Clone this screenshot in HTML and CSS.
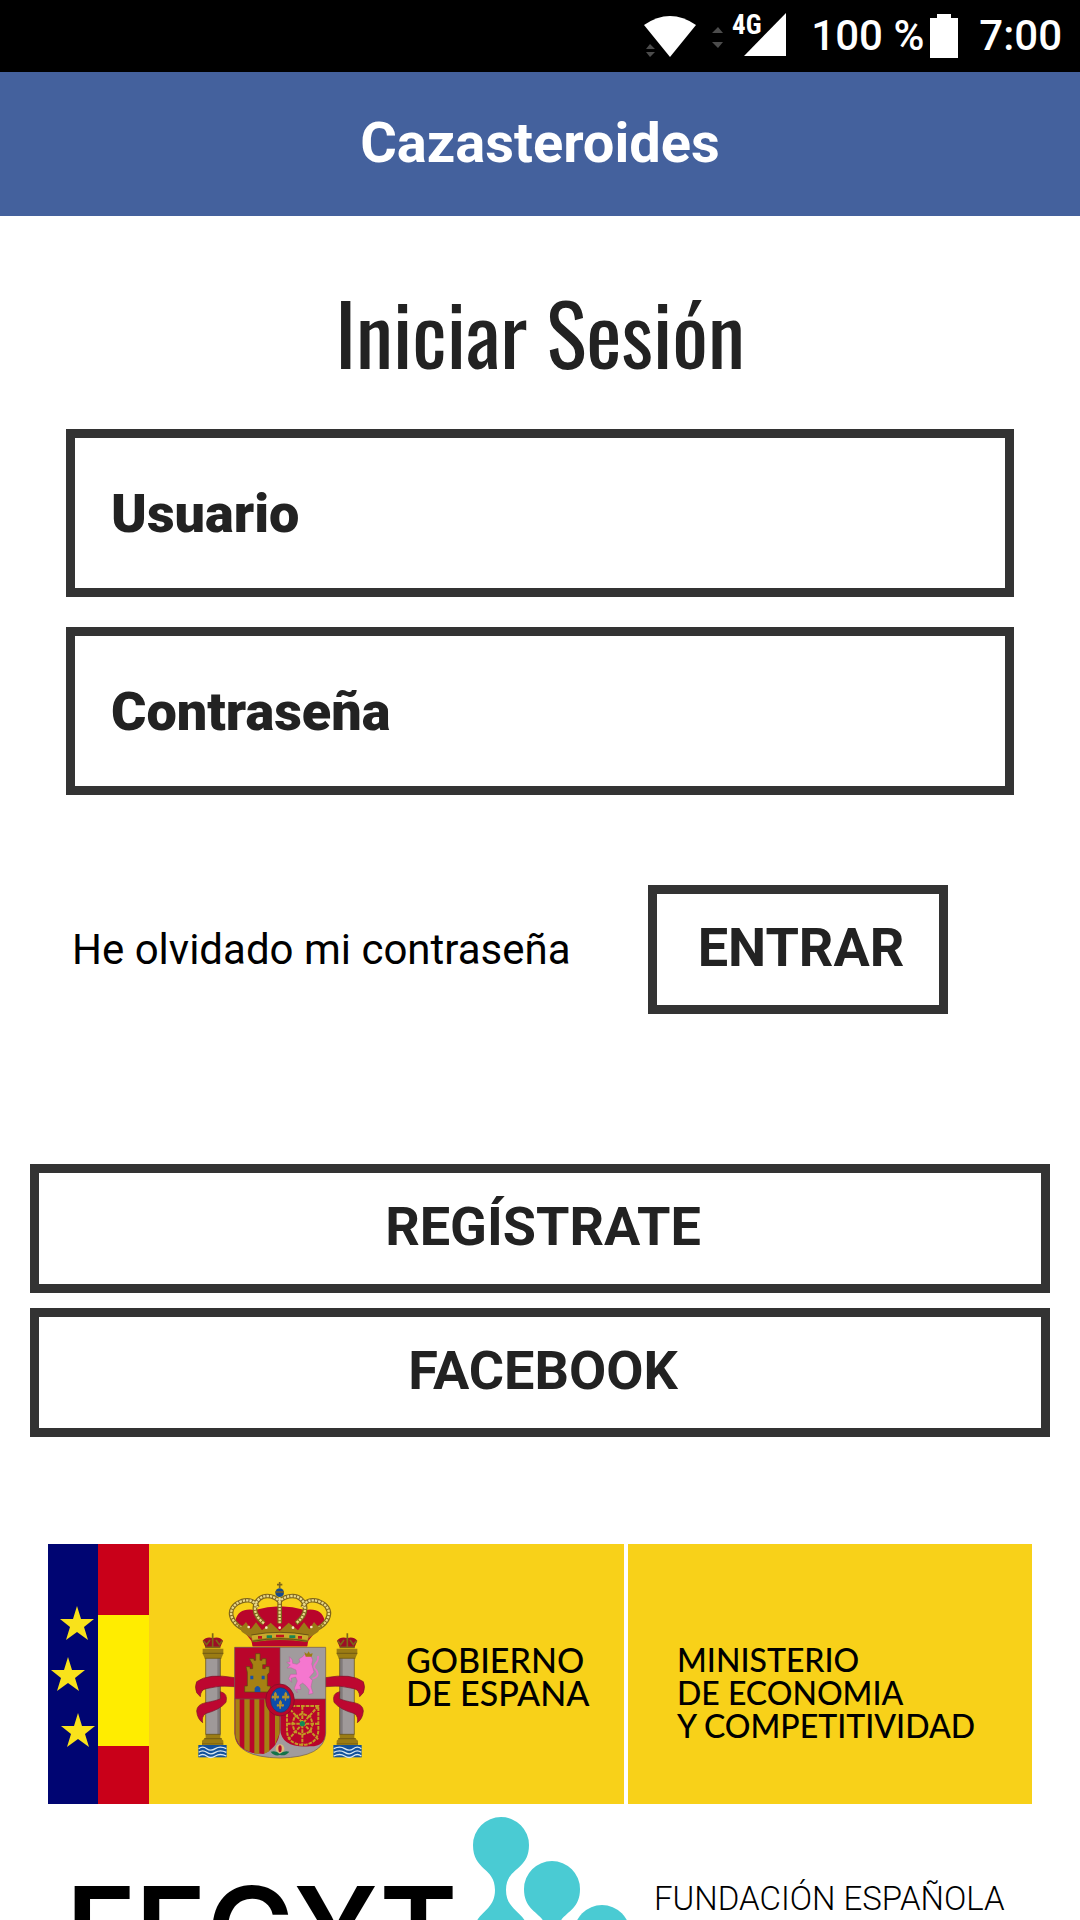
FILE: index.html
```html
<!DOCTYPE html>
<html lang="es">
<head>
<meta charset="utf-8">
<meta name="viewport" content="width=device-width, initial-scale=1">
<title>Cazasteroides</title>
<link rel="stylesheet" href="styles.css">
</head>
<body>
<div class="app">
  <div class="status">
    <svg class="status-radio" viewBox="0 0 148 72" width="148" height="72" aria-hidden="true">
      <path class="on" d="M3 25Q29 7 55 25L29 57Z"/>
      <path class="dim" d="M5 49L9 44L14 49ZM5 52L9 57L14 52Z"/>
      <path class="dim" d="M71 33L77 27L82 33ZM71 42L77 48L82 42Z"/>
      <text class="on net" x="91" y="34">4G</text>
      <path class="on" d="M103 56L145 13V56Z"/>
    </svg>
    <span class="charge">100 %</span>
    <svg class="battery" viewBox="0 0 28 44" width="28" height="44" aria-hidden="true"><path class="on" d="M7 0H21V4H28V44H0V4H7Z"/></svg>
    <span>7:00</span>
  </div>
  <header class="bar">Cazasteroides</header>
  <main class="content">
    <h1 class="title">Iniciar Sesión</h1>
    <form class="login">
      <input class="field" type="text" placeholder="Usuario" aria-label="Usuario">
      <input class="field" type="password" placeholder="Contraseña" aria-label="Contraseña">
      <div class="actions">
        <a class="forgot" href="#">He olvidado mi contraseña</a>
        <button class="btn enter" type="submit">ENTRAR</button>
      </div>
    </form>
    <div class="alternatives">
      <button class="btn" type="button">REGÍSTRATE</button>
      <button class="btn" type="button">FACEBOOK</button>
    </div>
    <footer class="sponsors">
      <div class="banner">
        <div class="gov">
          <svg class="flags" viewBox="0 0 101 260" width="101" height="260" aria-hidden="true">
            <path fill="#000572" d="M0 0H50V260H0Z"/>
            <path fill="#c90019" d="M50 0H101V260H50Z"/>
            <path fill="#ffed00" d="M50 71H101V202H50Z"/>
            <g fill="#f9e21b">
              <path id="star" d="M29 62L33 75H46L36 83L40 96L29 88L18 96L22 83L12 75H25Z"/>
              <use href="#star" x="-9" y="51"/>
              <use href="#star" x="1" y="107"/>
            </g>
          </svg>
          <svg class="arms" viewBox="0 0 600 600" width="200" height="200" aria-hidden="true">
            <!-- crown -->
            <path fill="#b9052b" d="M166 152Q175 112 225 120Q300 98 375 120Q425 112 434 152L385 212L381 229H218L214 212Z"/>
            <g fill="none" stroke="#7e641c" stroke-width="14">
              <path d="M212 185C145 165 135 112 184 94C208 86 226 94 232 112"/>
              <path d="M388 185C455 165 465 112 416 94C392 86 374 94 368 112"/>
              <path d="M252 160C205 125 226 78 262 78Q284 78 298 94Q314 78 338 78C374 78 395 125 348 160M299 84V160"/>
            </g>
            <g fill="none" stroke="#e9d98a" stroke-width="7" stroke-dasharray="7 3">
              <path d="M212 185C145 165 135 112 184 94C208 86 226 94 232 112"/>
              <path d="M388 185C455 165 465 112 416 94C392 86 374 94 368 112"/>
              <path d="M252 160C205 125 226 78 262 78Q284 78 298 94Q314 78 338 78C374 78 395 125 348 160M299 84V160"/>
            </g>
            <path fill="#9a7a16" d="M166 155L184 172L198 156L212 178L228 157L246 181L272 158L299 183L326 158L354 181L372 157L388 178L402 156L416 172L434 155L414 186L386 205L382 217Q300 204 218 217L214 205L186 186Z"/>
            <path fill="#b9052b" d="M218 217Q300 204 382 217V229H218Z"/>
            <path fill="none" stroke="#c9a92c" stroke-width="15" d="M216 203Q300 187 384 203"/>
            <path fill="none" stroke="#4b3b12" stroke-width="2" d="M214 195Q300 179 386 195M218 214Q300 198 382 214"/>
            <path fill="#c1121f" d="M288 194H312V202H288ZM234 198H246V206H234ZM354 198H366V206H354Z"/>
            <path fill="#1b8450" d="M260 196H276V204H260ZM328 196H346V204H328Z"/>
            <g fill="#f2e6c0"><circle cx="206" cy="171" r="4"/><circle cx="259" cy="173" r="4"/><circle cx="299" cy="173" r="4"/><circle cx="339" cy="173" r="4"/><circle cx="394" cy="171" r="4"/></g>
            <circle cx="299" cy="68" r="13" fill="#174a8c"/>
            <path fill="none" stroke="#806519" stroke-width="5" d="M299 36V54M291 44H307M286 66H312"/>

            <!-- left pillar, mirrored for the right one -->
            <g id="pillar">
              <path fill="#9c0d26" d="M68 212Q80 198 98 204Q118 198 129 212L120 233H77Z"/>
              <path fill="none" stroke="#7d6419" stroke-width="5" d="M98 190V230M70 212L80 224L90 210M127 212L118 224L108 210M76 232H121"/>
              <path fill="#9f9999" d="M77 265H121V497H77Z"/>
              <path fill="#807a7b" d="M112 265H121V497H112Z"/>
              <path fill="#9b7c13" d="M68 236H130V251L124 265H74L68 251Z"/>
              <path fill="#9b7c13" d="M77 493H121V503L130 512V524H66V512L77 503Z"/>
              <path fill="none" stroke="#5d4a11" stroke-width="2" d="M68 250H130M74 265H124M77 493H121M72 506H126M66 522H130M77 265V493M121 265V493"/>
              <path fill="#13529b" d="M55 525H140V562H55Z"/>
              <path fill="none" stroke="#dce8ee" stroke-width="4" d="M56 536Q68 527 80 536T106 536T139 536M56 547Q68 538 80 547T106 547T139 547M56 558Q68 549 80 558T106 558T139 558"/>
              <path fill="#bd0730" stroke="#7c1428" stroke-width="2" d="M164 323Q85 309 50 335Q43 350 50 368L61 380Q62 359 78 356Q120 344 164 350ZM121 365Q145 370 138 397Q120 419 76 431Q64 441 68 458Q52 447 50 423Q51 403 77 398Q109 392 122 386Z"/>
            </g>
            <use href="#pillar" transform="translate(600 0) scale(-1 1)"/>

            <!-- shield -->
            <path fill="#a19b9d" d="M164 232H437V490Q433 562 300 564Q167 562 164 490Z"/>
            <path fill="#b9052b" d="M164 232H300V387H164Z"/>
            <path fill="#b9052b" d="M301 387H437V488Q435 530 390 529Q305 535 301 480Z"/>
            <path fill="#b9052b" d="M164 387H300V480Q297 532 250 552Q167 550 164 490Z"/>
            <path fill="#a58113" d="M166 387H179V528L166 500ZM193 387H209V545L193 538ZM223 387H238V551H223ZM253 387H268V544L253 551ZM285 420H299V490L285 525Z"/>
            <path fill="none" stroke="#6b5650" stroke-width="2" d="M164 232H437V490Q433 562 300 564Q167 562 164 490ZM300 232V490M164 387H437"/>
            <path fill="#a58113" stroke="#5c4811" stroke-width="2" d="M194 366V348H202V307L198 290H210V296H218V284L208 266H222V271H227V251H240V271H246V266H258V284H248V296H256V290H268V307L262 314V348H271V366Z"/>
            <path fill="#1751a7" d="M224 366V355Q233 341 241 355V366ZM211 317H220V328H211ZM245 317H254V328H245Z"/>
            <path fill="#f577cf" stroke="#b04b91" stroke-width="1" d="M368 260L376 251L392 256L398 270L395 282L402 306L388 322L397 331L393 350L399 370L386 373L388 360L378 347L368 339L359 345L363 358L349 358L352 369L343 355L352 333L347 321L333 325L335 337L326 326L332 313L350 313L348 300L333 293L321 294L331 285L320 277L330 276L328 260L337 270L338 280L351 283L360 276L357 267Z"/>
            <path fill="none" stroke="#eb6cc6" stroke-width="5" d="M397 326C420 320 415 305 403 294C398 282 418 278 414 258"/>
            <path fill="#9b7c13" d="M373 246L381 252L386 244L390 252L398 250L395 260H377Z"/>
            <g fill="none" stroke="#c39a24" stroke-width="6" stroke-dasharray="11 3">
              <path d="M321 408H415V480Q414 522 367 525Q321 521 321 480ZM321 408L415 509M415 408L325 509M321 461H415M367 408V525"/>
              <path d="M344 440L367 431L391 440L398 461L391 485L367 494L344 485L337 461Z"/>
            </g>
            <circle cx="367" cy="461" r="8" fill="#128a55"/>
            <ellipse cx="300" cy="390" rx="43" ry="48" fill="#b9052b" stroke="#72142a" stroke-width="2"/>
            <ellipse cx="302" cy="390" rx="30" ry="37" fill="#0b4dab" stroke="#29375e" stroke-width="2"/>
            <g fill="#b3912c">
              <path id="lis" d="M286 365Q294 373 289 379Q298 373 297 383Q293 388 289 383L287 392H284L282 383Q278 388 275 383Q275 373 283 379Q279 373 286 365Z"/>
              <use href="#lis" x="31"/>
              <use href="#lis" x="15" y="25"/>
            </g>
            <circle cx="300" cy="536" r="13" fill="#d9bd78"/>
            <ellipse cx="300" cy="536" rx="5" ry="10" fill="#b10d28"/>
            <path fill="#147348" d="M272 545Q289 540 299 552Q311 541 328 545Q317 559 300 555Q283 560 272 545Z"/>
          </svg>
          <p class="banner-text state">GOBIERNO<br>DE ESPANA</p>
        </div>
        <div class="ministry">
          <p class="banner-text">MINISTERIO<br>DE ECONOMIA<br>Y COMPETITIVIDAD</p>
        </div>
      </div>
      <div class="fecyt">
        <strong class="wordmark">FECYT</strong>
        <svg class="drops" viewBox="0 0 164 164" width="164" height="164" aria-hidden="true">
          <g fill="#4acbd3">
            <path d="M28 0A28 28 0 0 1 56 28C56 54 33 50 33 73C33 96 56 94 56 119A28 28 0 0 1 0 119C0 94 22 96 22 73C22 50 0 54 0 28A28 28 0 0 1 28 0Z"/>
            <path d="M79 44A28 28 0 0 1 107 72C107 98 84 94 84 117C84 140 107 138 107 163H51C51 138 74 140 74 117C74 94 51 98 51 72A28 28 0 0 1 79 44Z"/>
            <circle cx="129" cy="116" r="28"/>
          </g>
        </svg>
        <p class="foundation">FUNDACIÓN ESPAÑOLA</p>
      </div>
    </footer>
  </main>
</div>
</body>
</html>
```
FILE: styles.css
```css
* { box-sizing: border-box; }

body {
  margin: 0;
  background: #fff;
  color: #222;
  font-family: Roboto, "Liberation Sans", sans-serif;
}

h1, p { margin: 0; }

.app {
  display: flex;
  flex-direction: column;
  height: 100vh;
}

.status {
  display: flex;
  flex: none;
  align-items: center;
  justify-content: flex-end;
  height: 72px;
  padding-right: 18px;
  background: #000;
  color: #fff;
  font-size: 42px;
  font-weight: 500;
  line-height: 74px;
}

.status svg { display: block; }
.on { fill: #fff; }
.dim { fill: #4c4c4c; }
.net { font: 700 27px "Roboto Condensed", Roboto, sans-serif; }
.charge { margin-left: 22px; }
.battery { margin: 0 21px 0 6px; }

.bar {
  flex: none;
  height: 144px;
  background: #44619d;
  color: #fff;
  font-size: 56px;
  font-weight: 700;
  line-height: 142px;
  text-align: center;
}

.content {
  flex: 1;
  min-height: 0;
  overflow-y: auto;
  scrollbar-width: none;
}

.title {
  padding-top: 55px;
  font-family: Oswald, "Roboto Condensed", "Liberation Sans Narrow", sans-serif;
  font-size: 84px;
  font-weight: 400;
  line-height: 120px;
  text-align: center;
}

.login {
  display: flex;
  flex-direction: column;
  gap: 30px;
  padding: 38px 66px 0;
}

.field {
  width: 100%;
  height: 168px;
  padding: 0 36px;
  border: 9px solid #333;
  border-radius: 0;
  background: #fff;
  color: #222;
  font: 900 54px Roboto, sans-serif;
  outline: 0;
}

.field::placeholder { color: #222; opacity: 1; }

.actions {
  display: flex;
  align-items: center;
  justify-content: space-between;
  padding: 60px 66px 0 6px;
}

.forgot {
  color: #000;
  font-size: 42px;
  text-decoration: none;
}

.btn {
  height: 129px;
  padding: 0 0 4px 6px;
  border: 9px solid #333;
  border-radius: 0;
  background: #fff;
  color: #222;
  font: 700 54px Roboto, sans-serif;
}

.enter { width: 300px; }

.alternatives {
  display: flex;
  flex-direction: column;
  gap: 15px;
  padding: 150px 30px 0;
}

.sponsors { padding: 107px 48px 0; }

.banner {
  display: grid;
  grid-template-columns: 576fr 404fr;
  gap: 4px;
  color: #000;
}

.gov, .ministry {
  display: flex;
  height: 260px;
  background: #f8d119;
}

.ministry { padding-left: 49px; }
.flags { flex: none; }
.arms { flex: none; margin: 26px 26px 0 31px; }

.banner-text {
  padding-top: 99px;
  font-family: Lato, sans-serif;
  font-size: 32px;
  font-weight: 500;
  line-height: 33px;
  white-space: nowrap;
}

.state { font-size: 34px; }

.fecyt {
  display: flex;
  align-items: flex-start;
  padding: 13px 0 0 18px;
  color: #000;
}

.wordmark {
  width: 407px;
  padding-top: 50px;
  font-family: Inter, sans-serif;
  font-size: 118px;
  font-weight: 600;
  line-height: 124px;
}

.drops { flex: none; }

.foundation {
  padding: 62px 0 0 17px;
  font-size: 33px;
  font-weight: 300;
  line-height: 40px;
  white-space: nowrap;
}
```
